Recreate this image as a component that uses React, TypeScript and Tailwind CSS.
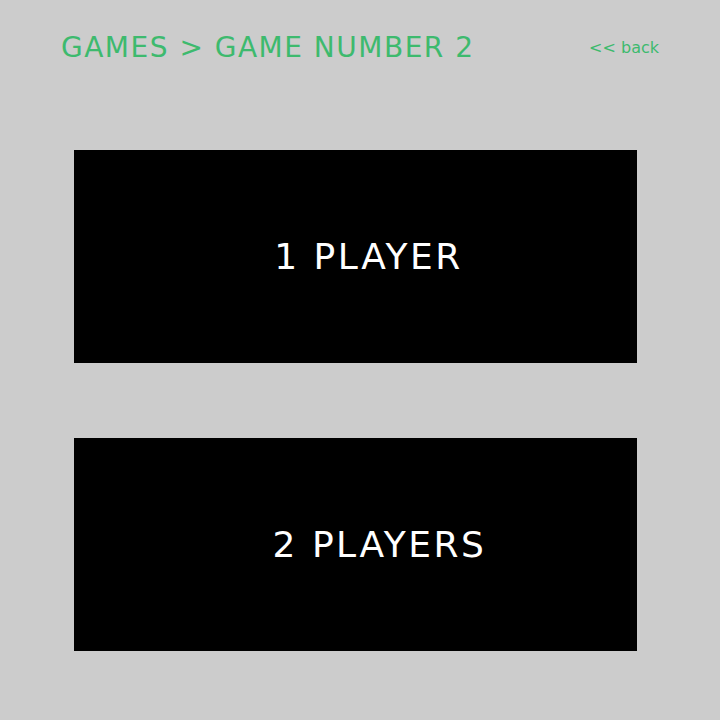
export default function App() {
  return (
    <div className="w-[720px] h-[720px] bg-[#cccccc] relative" style={{ fontFamily: '"DejaVu Sans", sans-serif' }}>
      <div className="flex items-center justify-between pt-[30px] pl-[61px] pr-[61px] h-[66px]">
        <div className="text-[#3dba6e] text-[28px] leading-none tracking-[1.5px]">GAMES &gt; GAME NUMBER 2</div>
        <div className="text-[#3dba6e] text-[16px] leading-none">&lt;&lt; back</div>
      </div>
      <div className="flex flex-col gap-[75px] pl-[74px] pt-[84px]">
        <div className="w-[563px] h-[213px] bg-black flex items-center justify-center">
          <span className="text-white text-[36px] leading-none tracking-[2.5px] ml-[26px]">1 PLAYER</span>
        </div>
        <div className="w-[563px] h-[213px] bg-black flex items-center justify-center">
          <span className="text-white text-[36px] leading-none tracking-[2.5px] ml-[48px]">2 PLAYERS</span>
        </div>
      </div>
    </div>
  );
}
